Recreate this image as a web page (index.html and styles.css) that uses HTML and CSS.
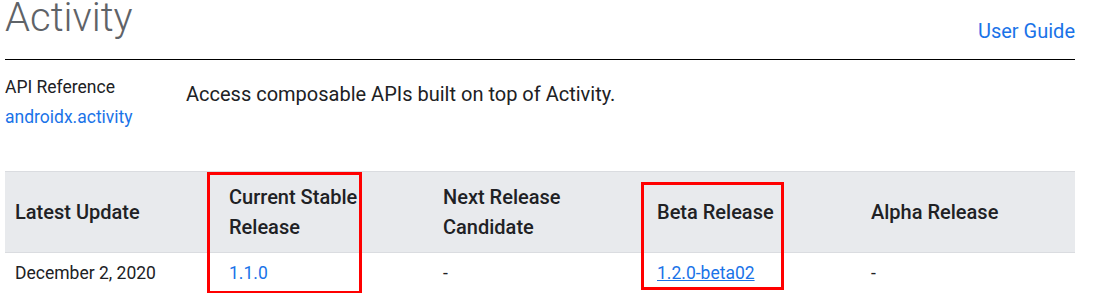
FILE: index.html
```html
<!DOCTYPE html>
<html lang="en">
<head>
<meta charset="utf-8">
<title>Activity</title>
<link rel="stylesheet" href="styles.css">
</head>
<body>
<div class="page">
  <header class="page-header">
    <h1 class="title">Activity</h1>
    <a class="guide-link" href="#">User Guide</a>
  </header>

  <section class="info">
    <div class="api-ref">
      <div class="api-label">API Reference</div>
      <a class="api-link" href="#">androidx.activity</a>
    </div>
    <p class="description">Access composable APIs built on top of Activity.</p>
  </section>

  <div class="release-wrap">
    <table class="releases">
      <thead>
        <tr>
          <th>Latest Update</th>
          <th>Current Stable Release</th>
          <th>Next Release Candidate</th>
          <th>Beta Release</th>
          <th>Alpha Release</th>
        </tr>
      </thead>
      <tbody>
        <tr>
          <td>December 2, 2020</td>
          <td><a class="ver" href="#">1.1.0</a></td>
          <td>-</td>
          <td><a class="ver ver-under" href="#">1.2.0-beta02</a></td>
          <td>-</td>
        </tr>
      </tbody>
    </table>
    <div class="mark mark-stable"></div>
    <div class="mark mark-beta"></div>
  </div>
</div>
</body>
</html>
```

FILE: styles.css
```css
html, body {
  margin: 0;
  padding: 0;
  background: #ffffff;
}

body {
  font-family: Roboto, "Noto Sans", "Liberation Sans", sans-serif;
  color: #202124;
  overflow: hidden;
}

.page {
  width: 1070px;
  padding-left: 5px;
}

.page-header {
  display: flex;
  justify-content: space-between;
  align-items: flex-start;
  height: 59px;
  border-bottom: 1px solid #000000;
}

.title {
  margin: 0;
  font-size: 40px;
  font-weight: 300;
  line-height: 36px;
  color: #5f6368;
}

.guide-link {
  margin-top: 19px;
  font-size: 20px;
  line-height: 24px;
  color: #1a73e8;
  text-decoration: none;
}

.info {
  display: grid;
  grid-template-columns: 181px 1fr;
  margin-top: 12px;
}

.api-ref {
  display: flex;
  flex-direction: column;
  font-size: 17.5px;
  line-height: 30px;
}

.api-label {
  color: #202124;
}

.api-link {
  color: #1a73e8;
  text-decoration: none;
}

.description {
  margin: 7px 0 0;
  font-size: 20px;
  line-height: 30px;
  color: #202124;
}

.release-wrap {
  position: relative;
  margin-top: 39px;
}

.releases {
  width: 1070px;
  border-collapse: collapse;
  table-layout: fixed;
}

.releases th {
  background: #e8eaed;
  border-top: 1px solid #dadce0;
  border-bottom: 1px solid #dadce0;
  padding: 10px 10px 10px 10px;
  font-size: 20px;
  font-weight: 500;
  line-height: 30px;
  text-align: left;
  vertical-align: middle;
  color: #202124;
}

.releases td {
  padding: 8px 10px;
  font-size: 17.5px;
  line-height: 24px;
  text-align: left;
  vertical-align: top;
  color: #202124;
}

.ver {
  color: #1a73e8;
  text-decoration: none;
}

.ver-under {
  text-decoration: underline;
}

.mark {
  position: absolute;
  box-sizing: border-box;
  border: 3px solid #ff0000;
}

.mark-stable {
  left: 202px;
  top: 1px;
  width: 155px;
  height: 122px;
}

.mark-beta {
  left: 636px;
  top: 11px;
  width: 143px;
  height: 108px;
}
```
